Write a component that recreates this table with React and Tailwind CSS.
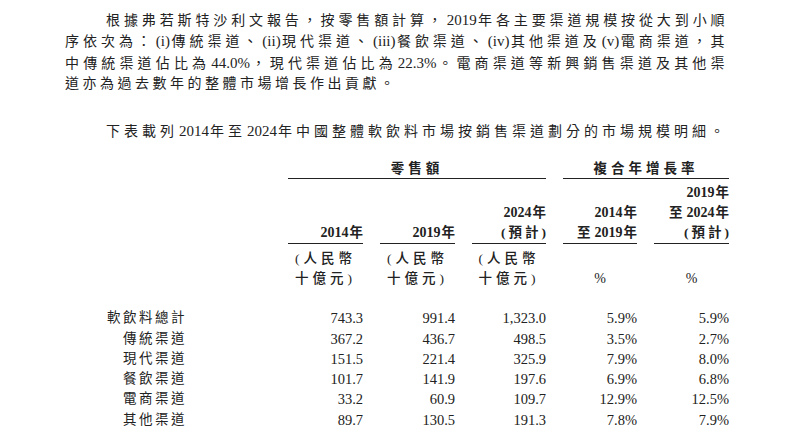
import React from 'react';

const L = ({ children }) => <span className="tracking-normal px-[1px] text-[15px]">{children}</span>;
const B = ({ children }) => <span className="tracking-normal px-[1px] text-[14px]">{children}</span>;

const grid = 'grid grid-cols-[164px_75px_75px_74px_74px_75px] gap-x-[17px] ml-[107px]';

const rows = [
  ['軟飲料總計', '743.3', '991.4', '1,323.0', '5.9%', '5.9%', false],
  ['傳統渠道', '367.2', '436.7', '498.5', '3.5%', '2.7%', true],
  ['現代渠道', '151.5', '221.4', '325.9', '7.9%', '8.0%', true],
  ['餐飲渠道', '101.7', '141.9', '197.6', '6.9%', '6.8%', true],
  ['電商渠道', '33.2', '60.9', '109.7', '12.9%', '12.5%', true],
  ['其他渠道', '89.7', '130.5', '191.3', '7.8%', '7.9%', true],
];

function Head({ lines }) {
  return (
    <div className="text-right border-b border-[#222]">
      {lines.map((l, i) => (
        <div key={i} className="-mr-[3px]">{l}</div>
      ))}
    </div>
  );
}

export default function App() {
  return (
    <div className="w-[792px] h-[435px] bg-white text-[#222] font-['Liberation_Serif','Noto_Sans_CJK_TC',serif] overflow-hidden">
      {/* paragraph */}
      <div className="pt-[10px] pl-[65px] w-[728px] text-[14px] leading-[20.3px] tracking-[3.5px]">
        <div className="pl-[41px] [text-align-last:justify]">
          根據弗若斯特沙利文報告，按零售額計算，<L>2019</L>年各主要渠道規模按從大到小順
        </div>
        <div className="[text-align-last:justify]">
          序依次為：<L>(i)</L>傳統渠道、<L>(ii)</L>現代渠道、<L>(iii)</L>餐飲渠道、<L>(iv)</L>其他渠道及<L>(v)</L>電商渠道，其
        </div>
        <div className="[text-align-last:justify]">
          中傳統渠道佔比為<L>44.0%</L>，現代渠道佔比為<L>22.3%</L>。電商渠道等新興銷售渠道及其他渠
        </div>
        <div>道亦為過去數年的整體市場增長作出貢獻。</div>
      </div>

      <div className="mt-[27px] pl-[106px] text-[14px] leading-[20.3px] tracking-[4px]">
        下表載列<L>2014</L>年至<L>2024</L>年中國整體軟飲料市場按銷售渠道劃分的市場規模明細。
      </div>

      {/* table header */}
      <div className={`${grid} mt-[17px] text-[13.5px] font-bold`}>
        <div />
        <div className="col-span-3 text-center leading-[19px] tracking-[4px] border-b border-[#222]">零售額</div>
        <div className="col-span-2 text-center leading-[19px] tracking-[4px] border-b border-[#222]">複合年增長率</div>
      </div>

      <div className={`${grid} mt-[4px] items-end text-[13.5px] font-bold leading-[20px] tracking-[3px]`}>
        <div />
        <Head lines={[<><B>2014</B>年</>]} />
        <Head lines={[<><B>2019</B>年</>]} />
        <Head lines={[<><B>2024</B>年</>, '(預計)']} />
        <Head lines={[<><B>2014</B>年</>, <>至<B>2019</B>年</>]} />
        <Head lines={[<><B>2019</B>年</>, <>至<B>2024</B>年</>, '(預計)']} />
      </div>

      <div className={`${grid} mt-[5px] items-end text-[13.5px] font-medium leading-[20px] tracking-[4px]`}>
        <div />
        {[0, 1, 2].map((i) => (
          <div key={i} className="text-center">
            <div>(人民幣</div>
            <div>十億元)</div>
          </div>
        ))}
        <div className="text-center tracking-normal text-[14px]">%</div>
        <div className="text-center tracking-normal text-[14px]">%</div>
      </div>

      {/* data */}
      <div className="mt-[19px]">
        {rows.map(([label, a, b, c, d, e, sub]) => (
          <div key={label} className={`${grid} leading-[20.2px]`}>
            <div className={`text-[13.5px] tracking-[2.5px] ${sub ? 'pl-[16px]' : ''}`}>{label}</div>
            <div className="text-right text-[14.5px]">{a}</div>
            <div className="text-right text-[14.5px]">{b}</div>
            <div className="text-right text-[14.5px]">{c}</div>
            <div className="text-right text-[14.5px]">{d}</div>
            <div className="text-right text-[14.5px]">{e}</div>
          </div>
        ))}
      </div>
    </div>
  );
}
